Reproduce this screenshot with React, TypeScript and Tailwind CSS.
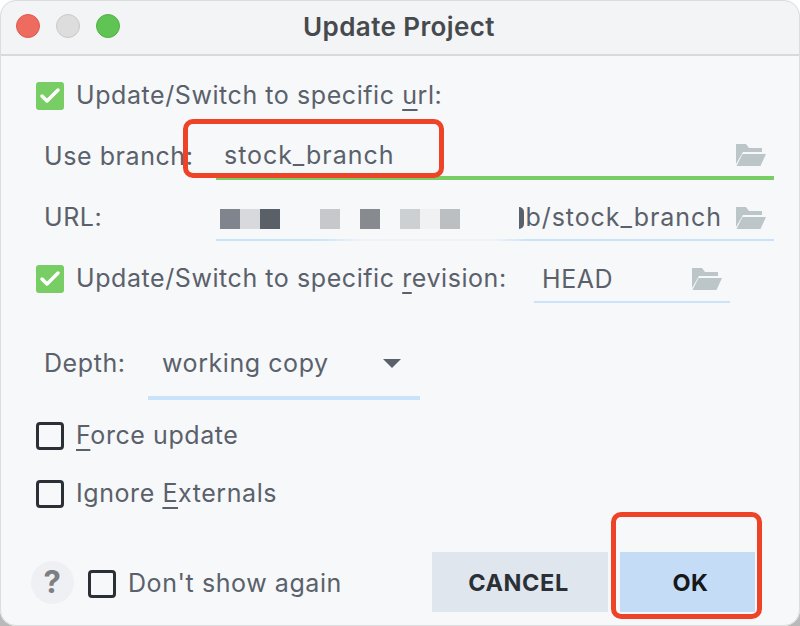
import { Check } from 'lucide-react'
import type { ReactNode } from 'react'

function FolderIcon() {
  return (
    <svg width="30" height="22" viewBox="0 0 30 22" className="shrink-0">
      <path d="M0 0H10L13 4H26V8H7L0 20Z" fill="#bcc5c8" />
      <path d="M6.5 10H30L24.5 22H0.5Z" fill="#bcc5c8" />
    </svg>
  )
}

function CheckBox({ checked }: { checked?: boolean }) {
  if (checked) {
    return (
      <div className="flex items-center justify-center w-[28px] h-[28px] rounded-[3px] bg-[#78cd64] shrink-0">
        <Check className="w-[24px] h-[24px] text-white" strokeWidth={3.5} />
      </div>
    )
  }
  return <div className="w-[28px] h-[28px] rounded-[4px] border-[3px] border-[#2b2f36] shrink-0" />
}

function CheckRow({ checked, children }: { checked?: boolean; children: ReactNode }) {
  return (
    <div className="flex items-center gap-[12px] h-[40px]">
      <CheckBox checked={checked} />
      <span>{children}</span>
    </div>
  )
}

const mnemonic = 'underline decoration-2 underline-offset-[5px]'

export default function App() {
  return (
    <div className="relative w-[800px] h-[626px] bg-[linear-gradient(#ffffff_50%,#b9b9b9_50%)] overflow-hidden font-['Inter',sans-serif] text-[25px] tracking-[0.57px] text-[#5a616b]">
      <div className="flex flex-col h-full rounded-[16px] overflow-hidden bg-[#f7f8fa]">
        {/* Title bar */}
        <div className="relative flex items-center justify-center h-[56px] shrink-0 bg-[#f3f4f5] border-b-2 border-[#d9dadb]">
          <div className="absolute left-[16px] top-[14px] flex gap-[16px]">
            <div className="w-[24px] h-[24px] rounded-full bg-[#ee6b60] border border-[#dd5a50]" />
            <div className="w-[24px] h-[24px] rounded-full bg-[#dcdddc] border border-[#c8c8c8]" />
            <div className="w-[24px] h-[24px] rounded-full bg-[#5fc454] border border-[#52b046]" />
          </div>
          <span className="pr-[2px] pb-[2px] text-[26px] font-semibold tracking-[0.4px] text-[#46494d]">Update Project</span>
        </div>

        {/* Form */}
        <div className="flex flex-col pl-[36px] pr-[26px]">
          <div className="mt-[20px]">
            <CheckRow checked>
              Update/Switch to specific <span className={mnemonic}>u</span>rl:
            </CheckRow>
          </div>

          <div className="flex mt-[17px] pl-[8px]">
            <span className="w-[172px] flex items-center h-[45px] pt-[2px] shrink-0">Use branch:</span>
            <div className="flex-1 flex items-center justify-between h-[47px] pl-[8px] pr-[8px] border-b-4 border-[#78cd64]">
              <span className="pt-[2px] tracking-[0.95px]">stock_branch</span>
              <FolderIcon />
            </div>
          </div>

          <div className="flex mt-[17px] pl-[8px]">
            <span className="w-[172px] flex items-center h-[42px] shrink-0">URL:</span>
            <div className="flex-1 flex flex-col h-[44px]">
              <div className="flex-1 flex items-center pl-[4px] pr-[8px]">
                <div className="flex w-[240px] h-[20px] mt-[2px] shrink-0">
                  <div className="w-[20px] bg-[#80848c]" />
                  <div className="w-[20px] bg-[#d8d9dc]" />
                  <div className="w-[20px] bg-[#5a6068]" />
                  <div className="w-[40px]" />
                  <div className="w-[20px] bg-[#c6c8cb]" />
                  <div className="w-[20px]" />
                  <div className="w-[20px] bg-[#878a8e]" />
                  <div className="w-[20px]" />
                  <div className="w-[20px] bg-[#cdd0d3]" />
                  <div className="w-[20px] bg-[#f0f1f3]" />
                  <div className="w-[20px] bg-[#bcbfc2]" />
                </div>
                <span className="flex-1 flex items-center justify-end tracking-[0.95px]">
                  <span className="w-[5px] h-[22px] mr-[1px] rounded-r-full bg-[#5a616b]" />
                  b/stock_branch
                </span>
                <span className="ml-[14px]"><FolderIcon /></span>
              </div>
              <div className="h-[2px] bg-[linear-gradient(90deg,#c9e3fb_0%,#c9e3fb_18%,#eef3f8_26%,#eef3f8_50%,#c9e3fb_56%,#c9e3fb_100%)]" />
            </div>
          </div>

          <div className="flex items-end mt-[16px]">
            <div className="w-[498px] h-[44px] mb-[2px] flex items-center shrink-0">
              <CheckRow checked>
                Update/Switch to specific <span className={mnemonic}>r</span>evision:
              </CheckRow>
            </div>
            <div className="flex items-center justify-between w-[196px] h-[46px] pl-[8px] pr-[8px] border-b-2 border-[#c9e3fb]">
              <span className="pt-[2px]">HEAD</span>
              <FolderIcon />
            </div>
          </div>

          <div className="flex items-center mt-[27px] pl-[8px]">
            <span className="w-[104px] pb-[2px] shrink-0">Depth:</span>
            <div className="flex items-center justify-between w-[272px] h-[70px] pl-[14px] pr-[19px] border-b-4 border-[#c9e3fb]">
              <span className="pt-[2px]">working copy</span>
              <div className="w-0 h-0 border-x-[9px] border-x-transparent border-t-[9px] border-t-[#5a616b]" />
            </div>
          </div>

          <div className="mt-[16px]">
            <CheckRow>
              <span className={mnemonic}>F</span>orce update
            </CheckRow>
          </div>
          <div className="mt-[18px]">
            <CheckRow>
              Ignore <span className={mnemonic}>E</span>xternals
            </CheckRow>
          </div>
        </div>

        {/* Footer */}
        <div className="flex items-center mt-[38px] pl-[31px] pr-[45px]">
          <div className="flex items-center justify-center w-[43px] h-[43px] rounded-full bg-[#eef0f3] text-[31px] font-bold text-[#7d7f82] shrink-0">
            ?
          </div>
          <div className="mt-[4px] ml-[14px]">
            <CheckRow>Don't show again</CheckRow>
          </div>
          <div className="flex ml-auto h-[60px] text-[23.5px] font-bold tracking-[0.6px]">
            <button className="w-[176px] pt-[2px] pr-[3px] bg-[#dfe6ee] text-[#2b2f36]">CANCEL</button>
            <button className="w-[135px] ml-[12px] pt-[2px] pl-[6px] bg-[#c5dcf6] text-[#16181c]">OK</button>
          </div>
        </div>
      </div>

      {/* Window edge */}
      <div className="absolute inset-0 rounded-[16px] border border-[#dcdddd] pointer-events-none" />

      {/* Red annotations */}
      <div className="absolute left-[183px] top-[119px] w-[261px] h-[59px] rounded-[10px] border-[5px] border-[#ef4327]" />
      <div className="absolute left-[611px] top-[512px] w-[151px] h-[107px] rounded-[10px] border-[5px] border-[#ef4327]" />
    </div>
  )
}
